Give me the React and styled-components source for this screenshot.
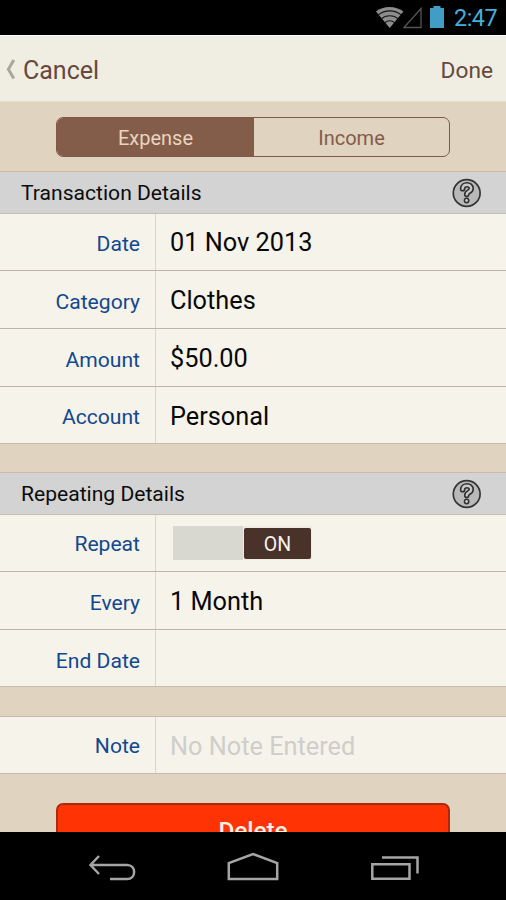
import React, { useState } from 'react'
import styled, { createGlobalStyle } from 'styled-components'


const GlobalStyle = createGlobalStyle`
  * {
    box-sizing: border-box;
  }

  body {
    margin: 0;
    background: #000;
    font-family: Roboto, 'Liberation Sans', sans-serif;
  }
`

const Screen = styled.div`
  display: flex;
  flex-direction: column;
  width: 506px;
  height: 900px;
  overflow: hidden;
  background: #e0d3bf;
`

const StatusBar = styled.div`
  display: flex;
  flex: none;
  justify-content: flex-end;
  height: 35px;
  padding-right: 9px;
  background: #000;
`

const Clock = styled.span`
  margin-left: 9px;
  color: #41b0dc;
  font-size: 23.5px;
  line-height: 37px;
  letter-spacing: -0.6px;
`

const Header = styled.header`
  display: flex;
  flex: none;
  align-items: center;
  height: 67px;
  padding: 2px 13px 0 6px;
  background: #f0ede2;
  border-top: 1px solid #fffdf6;
  border-bottom: 1px solid #e6dfd0;
`

const HeaderButton = styled.button`
  padding: 2px 0 0;
  border: 0;
  background: none;
  color: #66493c;
  font-family: inherit;
  font-size: ${props => props.$size}px;
  margin-left: ${props => props.$push ? 'auto' : '6px'};
`

const Content = styled.main`
  flex: 1;
  overflow: hidden;
`

const Segments = styled.div`
  display: flex;
  width: 394px;
  height: 40px;
  margin: 15px 0 14px 56px;
  border: 1px solid #805948;
  border-radius: 7px;
  overflow: hidden;
`

const Segment = styled.button`
  width: ${props => props.$width}px;
  padding: 2px 0 0;
  border: 0;
  background: ${props => props.$active ? '#835c4a' : 'transparent'};
  color: ${props => props.$active ? '#ead4bf' : '#835c4a'};
  font-family: inherit;
  font-size: 20px;
`

const SectionTitle = styled.h2`
  display: flex;
  align-items: center;
  justify-content: space-between;
  height: 43px;
  margin: 0;
  padding: 0 24px 0 21px;
  border-top: 1px solid #c9bbab;
  border-bottom: 1px solid #c5beb1;
  background: #d3d3d3;
  color: #0c0c0c;
  font-size: 21.1px;
  font-weight: 400;
`

const Group = styled.section`
  margin-bottom: ${props => props.$gap}px;
  border-top: ${props => props.$topLine ? '1px solid #c5bcae' : '0'};
`

const Line = styled.div`
  display: flex;
  height: ${props => props.$height}px;
  background: #f6f3ea;
  border-bottom: 1px solid ${props => props.$last ? '#c5bcae' : '#bdb5ac'};
`

const Label = styled.div`
  flex: none;
  width: 156px;
  padding: ${props => props.$top}px 15px 0 0;
  border-right: 1px solid #d9d6cf;
  color: #124890;
  font-size: 21.1px;
  line-height: 30px;
  text-align: right;
  white-space: nowrap;
`

const Value = styled.div`
  padding: ${props => props.$top}px 0 0 14px;
  color: ${props => props.$muted ? '#cfcecb' : '#080808'};
  font-size: 25.3px;
  line-height: 30px;
  white-space: nowrap;
`

const Toggle = styled.button`
  display: flex;
  justify-content: flex-end;
  width: 139px;
  height: 34px;
  margin: 11px 0 0 17px;
  padding: 2px 1px 1px 0;
  border: 0;
  background: ${props => props.$on ? 'linear-gradient(90deg, #d9d8d0 70px, #f0ece3 70px)' : '#d9d8d0'};
  font-family: inherit;
`

const Knob = styled.span`
  width: 67px;
  height: 31px;
  border-radius: 2px;
  background: #49322a;
  color: #f8f3ec;
  font-size: 19.5px;
  line-height: 33px;
  text-align: center;
`

const DeleteButton = styled.button`
  display: block;
  width: 394px;
  height: 52px;
  margin-left: 56px;
  padding: 3px 0 0;
  border: 2px solid #a92a0d;
  border-radius: 7px;
  background: #ff3304;
  color: #fff0e8;
  font-family: inherit;
  font-size: 24.3px;
  font-weight: 500;
`

const NavBar = styled.nav`
  display: flex;
  flex: none;
  height: 68px;
  background: #000;
`


const HelpIcon = () => (
  <svg width='30' height='30' viewBox='0 0 30 30' fill='none'>
    <circle cx='14.7' cy='15' r='13.4' fill='#b9b9b9' stroke='#343434' strokeWidth='1.7' />
    <g strokeLinecap='round' strokeLinejoin='round'>
      <path d='M10.6 10.8C10.8 5.4 19.4 5.6 19.2 10.6C19.1 13.8 14.7 13.4 14.7 16.4' stroke='#303030' strokeWidth='5.6' />
      <circle cx='14.6' cy='22.5' r='2.9' fill='#303030' />
      <path d='M10.6 10.8C10.8 5.4 19.4 5.6 19.2 10.6C19.1 13.8 14.7 13.4 14.7 16.4' stroke='#c8c8c8' strokeWidth='2.4' />
      <circle cx='14.6' cy='22.5' r='1.4' fill='#c8c8c8' />
    </g>
  </svg>
)

const StatusIcons = () => (
  <svg width='69' height='35' viewBox='0 0 69 35' fill='none'>
    <path d='M0 11.5C7 5.5 20 5.5 27.4 11.5L13.7 28Z' fill='#8d8d8d' />
    <path d='M2 15C9 9.5 18.5 9.5 25.5 15M5 19C10 14.7 17.5 14.7 22.5 19M8.5 23C12 20 15.5 20 19 23' stroke='#151515' strokeWidth='1.1' />
    <path d='M28 27.5L45 8.5V27.5Z' stroke='#555' strokeWidth='1.3' />
    <path d='M57.5 6H64.5V8H68V28H54V8H57.5Z' fill='#3f9dc6' />
  </svg>
)

const BackArrow = () => (
  <svg width='11' height='22' viewBox='0 0 11 22' fill='none'>
    <path d='M7.8 1L2.4 10.3L7.8 19.6' stroke='#a9a79e' strokeWidth='3' />
  </svg>
)

const NavIcons = () => (
  <svg width='506' height='68' viewBox='0 0 506 68' fill='none' stroke='#a5a5a5' strokeWidth='2.5'>
    <path d='M99 24L90.5 33L99 42M90.5 33H127C136.5 33 136.5 47 127 47H110' />
    <path d='M228.8 47V31L253 22L277.2 31V47Z' />
    <path d='M372.3 32.3H409.5V46.7H372.3ZM382 25.5H417.5V41.5' />
  </svg>
)


const details = [
  { label: 'Date', value: '01 Nov 2013', height: 57, top: 15, valueTop: 14 },
  { label: 'Category', value: 'Clothes', height: 58, top: 16, valueTop: 15 },
  { label: 'Amount', value: '$50.00', height: 58, top: 16, valueTop: 15 },
  { label: 'Account', value: 'Personal', height: 57, top: 15, valueTop: 15 },
]

const Row = ({ label, value, height, top, valueTop, last, muted, children }) => (
  <Line $height={height} $last={last}>
    <Label $top={top}>{label}</Label>
    {children || <Value $top={valueTop} $muted={muted}>{value}</Value>}
  </Line>
)

const App = () => {
  const [type, setType] = useState('Expense')
  const [repeat, setRepeat] = useState(true)

  return (
    <Screen>
      <GlobalStyle />
      <StatusBar>
        <StatusIcons />
        <Clock>2:47</Clock>
      </StatusBar>
      <Header>
        <BackArrow />
        <HeaderButton $size={25}>Cancel</HeaderButton>
        <HeaderButton $size={22.7} $push>Done</HeaderButton>
      </Header>
      <Content>
        <Segments>
          <Segment $width={197} $active={type === 'Expense'} onClick={() => setType('Expense')}>Expense</Segment>
          <Segment $width={195} $active={type === 'Income'} onClick={() => setType('Income')}>Income</Segment>
        </Segments>
        <Group $gap={28}>
          <SectionTitle>Transaction Details <HelpIcon /></SectionTitle>
          {details.map((item, i) => (
            <Row key={item.label} {...item} last={i === details.length - 1} />
          ))}
        </Group>
        <Group $gap={29}>
          <SectionTitle>Repeating Details <HelpIcon /></SectionTitle>
          <Row label='Repeat' height={57} top={14}>
            <Toggle $on={repeat} onClick={() => setRepeat(!repeat)}>
              <Knob>{repeat ? 'ON' : 'OFF'}</Knob>
            </Toggle>
          </Row>
          <Row label='Every' value='1 Month' height={58} top={16} valueTop={15} />
          <Row label='End Date' value='' height={57} top={16} valueTop={15} last />
        </Group>
        <Group $gap={29} $topLine>
          <Row label='Note' value='No Note Entered' height={57} top={14} valueTop={15} last muted />
        </Group>
        <DeleteButton>Delete</DeleteButton>
      </Content>
      <NavBar>
        <NavIcons />
      </NavBar>
    </Screen>
  )
}

export default App
